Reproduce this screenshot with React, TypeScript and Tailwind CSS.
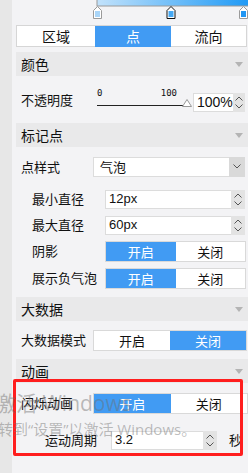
import React from "react";

const font = "font-['Noto_Sans_CJK_SC','Noto_Sans',sans-serif]";

function Caret() {
  return (
    <svg width="8" height="5" viewBox="0 0 8 5">
      <path d="M0 0 L8 0 L4 5 Z" fill="#b4b4b4" />
    </svg>
  );
}

function Header({ title }: { title: string }) {
  return (
    <div className="h-[24px] bg-[#e9e9ea] flex items-center justify-between pl-[5px] pr-[5px] text-[14px]">
      <span>{title}</span>
      <Caret />
    </div>
  );
}

function Spinner() {
  return (
    <div className="w-[14px] h-full bg-[#e3e3e3] flex flex-col items-center justify-center gap-[3px]">
      <svg width="8" height="5" viewBox="0 0 8 5">
        <path d="M0.5 4.5 L4 1 L7.5 4.5" stroke="#555" fill="none" strokeWidth="1" />
      </svg>
      <svg width="8" height="5" viewBox="0 0 8 5">
        <path d="M0.5 0.5 L4 4 L7.5 0.5" stroke="#555" fill="none" strokeWidth="1" />
      </svg>
    </div>
  );
}

function NumberInput({ value, width, big }: { value: string; width: string; big?: boolean }) {
  return (
    <div className={`${width} h-[19px] flex bg-white`}>
      <div
        className={`flex-1 border border-[#dcdcdc] border-r-0 flex items-center pl-[3px] text-[#111] font-['Liberation_Sans',sans-serif] ${
          big ? "text-[14px]" : "text-[13px]"
        }`}
      >
        {value}
      </div>
      <Spinner />
    </div>
  );
}

function Toggle({ on, width }: { on: boolean; width: string }) {
  return (
    <div className={`${width} h-[21px] grid grid-cols-2 border border-[#d9d9d9] bg-white text-[13px]`}>
      <div className={`flex items-center justify-center ${on ? "bg-[#419bf3] text-white" : "text-[#111]"}`}>开启</div>
      <div className={`flex items-center justify-center ${!on ? "bg-[#419bf3] text-white" : "text-[#111]"}`}>关闭</div>
    </div>
  );
}

function Marker({ x, stroke, fill }: { x: number; stroke: string; fill: string }) {
  return (
    <g transform={`translate(${x - 4.5},6)`}>
      <path d="M0.5 4.5 L4.5 0.5 L8.5 4.5 L8.5 12.5 L0.5 12.5 Z" fill="#fff" stroke={stroke} />
      <rect x="2" y="5" width="5" height="6" fill={fill} />
    </g>
  );
}

export default function App() {
  return (
    <div className={`relative w-[248px] h-[473px] overflow-hidden flex bg-[#f3f3f5] text-[13px] text-[#111] ${font}`}>
      <div className="w-[12px] shrink-0 bg-[#e7e7e7]" />
      <div className="flex-1 flex flex-col pl-[4px]">
        {/* gradient stops */}
        <svg width="232" height="25" viewBox="0 0 232 25" className="shrink-0">
          <defs>
            <linearGradient id="g" x1="0" x2="1" y1="0" y2="0">
              <stop offset="0" stopColor="#c2e2fb" />
              <stop offset="1" stopColor="#1f9af6" />
            </linearGradient>
          </defs>
          <rect x="81" y="-1" width="152" height="7" fill="url(#g)" stroke="#9a9a9a" />
          <Marker x={81.5} stroke="#9a9a9a" fill="#a9d5f8" />
          <Marker x={155} stroke="#111" fill="#46a9f4" />
          <Marker x={227.5} stroke="#9a9a9a" fill="#2197f4" />
        </svg>

        {/* tabs */}
        <div className="h-[22px] mr-[1px] grid grid-cols-[78px_76px_1fr] border border-[#d6d6d6] bg-white text-[14px]">
          <div className="flex items-center justify-center">区域</div>
          <div className="flex items-center justify-center bg-[#419bf3] text-white">点</div>
          <div className="flex items-center justify-center">流向</div>
        </div>

        <div className="mt-[5px]">
          <Header title="颜色" />
        </div>
        <div className="h-[47px] flex items-center">
          <div className="w-[77px] pl-[5px]">不透明度</div>
          <div className="relative w-[96px] h-[22px] ml-[4px]">
            <div className="flex justify-between w-[80px] text-[9px] leading-none font-['DejaVu_Sans_Mono',monospace]">
              <span>0</span>
              <span>100</span>
            </div>
            <div className="w-[86px] mt-[7px] border-b border-[#222]" />
            <svg width="10" height="8" viewBox="0 0 10 8" className="absolute left-[85px] top-[10px]">
              <path d="M0.5 7.5 L5 0.5 L9.5 7.5 Z" fill="#fff" stroke="#999" />
            </svg>
          </div>
          <div className="mt-[5px]">
            <NumberInput value="100%" width="w-[52px]" big />
          </div>
        </div>

        <Header title="标记点" />
        <div className="h-[39px] flex items-center">
          <div className="w-[77px] pl-[5px]">点样式</div>
          <div className="w-[152px] h-[20px] flex bg-white">
            <div className="flex-1 border border-[#dcdcdc] border-r-0 flex items-center pl-[6px]">气泡</div>
            <div className="w-[16px] bg-[#d9d9d9] flex items-center justify-center">
              <svg width="8" height="5" viewBox="0 0 8 5">
                <path d="M0.5 0.5 L4 4 L7.5 0.5" stroke="#555" fill="none" />
              </svg>
            </div>
          </div>
        </div>
        <div className="h-[26px] flex items-center">
          <div className="w-[89px] pl-[16px]">最小直径</div>
          <NumberInput value="12px" width="w-[140px]" />
        </div>
        <div className="h-[26px] flex items-center">
          <div className="w-[89px] pl-[16px]">最大直径</div>
          <NumberInput value="60px" width="w-[140px]" />
        </div>
        <div className="h-[26px] flex items-center">
          <div className="w-[89px] pl-[16px]">阴影</div>
          <Toggle on width="w-[141px]" />
        </div>
        <div className="h-[28px] flex items-center">
          <div className="w-[89px] pl-[16px] whitespace-nowrap">展示负气泡</div>
          <Toggle on width="w-[141px]" />
        </div>

        <div className="mt-[5px]">
          <Header title="大数据" />
        </div>
        <div className="h-[38px] flex items-center">
          <div className="w-[77px] pl-[5px] whitespace-nowrap">大数据模式</div>
          <Toggle on={false} width="w-[154px]" />
        </div>

        <Header title="动画" />
        <div className="h-[40px] flex items-center">
          <div className="w-[77px] pl-[5px]">闪烁动画</div>
          <Toggle on width="w-[155px]" />
        </div>
        <div className="h-[34px] flex items-center">
          <div className="w-[95px] pl-[29px]">运动周期</div>
          <NumberInput value="3.2" width="w-[106px]" />
          <span className="ml-[12px]">秒</span>
        </div>
      </div>

      {/* annotation frame */}
      <div className="absolute left-[13px] top-[379px] w-[230px] h-[77px] border-[3px] border-[#ff1e1e] rounded-[2px] pointer-events-none" />

      {/* activation watermark */}
      <div className="absolute left-[-5px] top-[390px] pointer-events-none text-[rgba(110,110,110,0.45)] font-['Open_Sans','Noto_Sans_CJK_SC',sans-serif] whitespace-nowrap">
        <div className="text-[21px] leading-[26px]">激活 Windows</div>
        <div className="text-[15px] leading-[20px] ml-[3px] mt-[3px]">转到“设置”以激活 Windows。</div>
      </div>
    </div>
  );
}
